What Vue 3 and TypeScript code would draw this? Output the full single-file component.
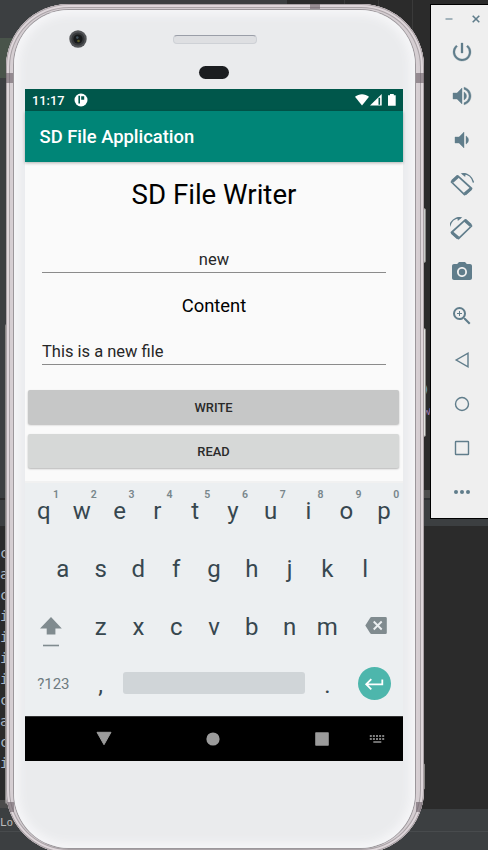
<script setup lang="ts">
import { ref } from 'vue'

const fileName = ref('new')
const content = ref('This is a new file')

const codeGlyphs = ['c', 'a', 'c', 'i', 'i', 'i', 'i', 'c', 'a', 'c', 'i']
const topRow = 'qwertyuiop'.split('').map((key, i) => ({ key, digit: (i + 1) % 10 }))
const homeRow = 'asdfghjkl'.split('')
const bottomRow = 'zxcvbnm'.split('')
</script>

<template>
  <main class="stage">
    <div class="desktop">
      <div class="ide-left">
        <div class="ide-highlight"></div>
        <div class="ide-code">
          <span v-for="(glyph, i) in codeGlyphs" :key="i">{{ glyph }}</span>
        </div>
      </div>
      <div class="ide-right"></div>
      <div class="ide-top"><i></i><i></i><i></i></div>
      <div class="ide-bottom"><span>Lo</span></div>
      <span class="hint hint-paren">)</span>
      <span class="hint hint-w">w</span>
    </div>

    <section class="phone">
      <i class="side-button power"></i>
      <i class="side-button volume"></i>
      <i class="side-button lower"></i>
      <i class="side-button left"></i>
      <div class="metal">
        <i class="band band-top"></i>
        <i class="band band-tl"></i>
        <i class="band band-tr"></i>
        <i class="band band-bl"></i>
        <i class="band band-br"></i>
        <div class="face">
          <div class="hardware">
            <svg class="camera" viewBox="0 0 18 18">
              <circle cx="9" cy="9" r="8.7" fill="#525457" />
              <circle cx="9" cy="9" r="6.6" fill="#36383b" />
              <circle cx="9" cy="9" r="4.6" fill="#17191b" />
              <circle cx="8.3" cy="7.6" r="1.3" fill="#41505b" />
              <circle cx="9.5" cy="11" r="1.3" fill="#5d5c27" />
            </svg>
            <div class="speaker"></div>
            <div class="sensor"></div>
          </div>

          <div class="screen">
            <div class="status">
              <span>11:17</span>
              <svg class="app-badge" viewBox="0 0 14 14">
                <circle cx="7" cy="7" r="6.5" fill="#fff" />
                <path d="M4.4 2.8H6v7.6H4.4zM7.2 3.2h3v3.6h-3z" fill="#00574b" />
              </svg>
              <svg class="signals" viewBox="0 0 42 14">
                <path d="M0 3.7C4 .3 10 .3 14 3.7L7 12.5z" fill="#fff" />
                <path d="M15 12.5 26.7 1v11.5z" fill="#fff" />
                <path d="M24.3 4.8v6.9" stroke="#00574b" stroke-width="1.6" />
                <path d="M33 2.2h2V1h3.8v1.2h1.9v10.5H33z" fill="#fff" />
              </svg>
            </div>
            <header class="app-bar">SD File Application</header>

            <div class="content">
              <h1>SD File Writer</h1>
              <div class="field centered">{{ fileName }}</div>
              <h2>Content</h2>
              <div class="field">{{ content }}</div>
              <button class="write" type="button">WRITE</button>
              <button class="read" type="button">READ</button>
            </div>

            <div class="keyboard">
              <div class="row">
                <span v-for="k in topRow" :key="k.key" class="key">{{ k.key }}<sup>{{ k.digit }}</sup></span>
              </div>
              <div class="row home">
                <span v-for="k in homeRow" :key="k" class="key">{{ k }}</span>
              </div>
              <div class="row">
                <span class="key wide shift">
                  <svg viewBox="0 0 22 30">
                    <path d="M11 0 21.8 11.5h-6.4v6H6.7v-6H0z" fill="#808b8f" />
                    <path d="M3 28.5h16" stroke="#808b8f" stroke-width="1.6" />
                  </svg>
                </span>
                <span v-for="k in bottomRow" :key="k" class="key">{{ k }}</span>
                <span class="key wide erase">
                  <svg viewBox="0 0 22 17">
                    <path d="M6.5 0h14q1.3 0 1.3 1.3v14.4q0 1.3-1.3 1.3h-14q-.8 0-1.3-.8L.3 8.5 5.2.8Q5.7 0 6.5 0z" fill="#808b8f" />
                    <path d="m8.7 4.5 8 8m0-8-8 8" stroke="#eceff1" stroke-width="1.9" />
                  </svg>
                </span>
              </div>
              <div class="row">
                <span class="key wide symbols">?123</span>
                <span class="key punct">,</span>
                <span class="space"></span>
                <span class="key punct">.</span>
                <span class="key wide">
                  <svg class="enter" viewBox="0 0 33 33">
                    <circle cx="16.5" cy="16.5" r="16.5" fill="#4db6ac" />
                    <path d="M24.3 12.5v4.8H9M13.3 12.2 8.2 17.3l5.1 5.1" fill="none" stroke="#fff" stroke-width="1.8" />
                  </svg>
                </span>
              </div>
            </div>

            <nav class="nav-bar">
              <svg width="16" height="16" viewBox="0 0 16 16"><path d="M1 1.3h14L8 13.7z" fill="#9b9b9b" stroke="#9b9b9b" stroke-linejoin="round" /></svg>
              <svg width="16" height="16" viewBox="0 0 16 16"><circle cx="8" cy="8" r="6.6" fill="#9b9b9b" /></svg>
              <svg width="16" height="16" viewBox="0 0 16 16"><rect x="1.2" y="1.3" width="13.6" height="13.4" rx=".7" fill="#9b9b9b" /></svg>
              <svg width="16" height="16" viewBox="0 0 16 16">
                <path d="M.8 5h15M.8 8.1h15" stroke="#aaa" stroke-width="1.5" stroke-dasharray="2 1.1" />
                <path d="M4.3 11h8" stroke="#aaa" stroke-width="1.3" />
              </svg>
            </nav>
          </div>
        </div>
      </div>
    </section>

    <aside class="tools">
      <div class="window-buttons">
        <svg width="10" height="10" viewBox="0 0 10 10"><path d="M1.5 5h7" stroke="#90a4ae" stroke-width="1.6" /></svg>
        <svg width="10" height="10" viewBox="0 0 10 10"><path d="m1.7 1.7 6.6 6.6m0-6.6L1.7 8.3" stroke="#607d8b" stroke-width="1.6" /></svg>
      </div>
      <svg viewBox="0 0 24 24"><path d="M13 3h-2v10h2V3zm4.83 2.17-1.42 1.42A6.92 6.92 0 0 1 19 12a7 7 0 1 1-11.42-5.42L6.17 5.17A8.93 8.93 0 0 0 3 12a9 9 0 1 0 14.83-6.83z" stroke="#607d8b" stroke-width=".3" /></svg>
      <svg viewBox="0 0 24 24"><path d="M3 9v6h4l5 5V4L7 9H3zm13.5 3c0-1.77-1.02-3.29-2.5-4.03v8.05c1.48-.73 2.5-2.25 2.5-4.02zM14 3.23v2.06c2.89.86 5 3.54 5 6.71s-2.11 5.85-5 6.71v2.06c4.01-.91 7-4.49 7-8.77s-2.99-7.86-7-8.77z" stroke="#607d8b" stroke-width=".4" /></svg>
      <svg viewBox="0 0 24 24"><path d="M18.5 12c0-1.77-1.02-3.29-2.5-4.03v8.05c1.48-.73 2.5-2.25 2.5-4.02zM5 9v6h4l5 5V4L9 9H5z" stroke="#607d8b" stroke-width=".4" /></svg>
      <svg viewBox="0 0 24 24">
        <g class="line">
          <path d="M7.7 3.8 21.6 16.5l-7.1 6.2L1.4 10z" stroke-width="1.7" stroke-linejoin="round" />
          <path d="m2.2 9.5 5.9-5.2M14.8 22l6.2-5.4" stroke-width="3.2" />
          <path d="M12.5 1.7c5.5-.3 9.7 3.3 11 8.8" stroke-width="1.4" />
        </g>
        <path d="m10.7 1.2 5-.3-.5 4.2z" />
      </svg>
      <svg viewBox="0 0 24 24">
        <g transform="matrix(-1 0 0 1 23 0)">
          <g class="line">
            <path d="M7.7 3.8 21.6 16.5l-7.1 6.2L1.4 10z" stroke-width="1.7" stroke-linejoin="round" />
            <path d="m2.2 9.5 5.9-5.2M14.8 22l6.2-5.4" stroke-width="3.2" />
            <path d="M12.5 1.7c5.5-.3 9.7 3.3 11 8.8" stroke-width="1.4" />
          </g>
          <path d="m10.7 1.2 5-.3-.5 4.2z" />
        </g>
      </svg>
      <svg viewBox="0 0 24 24"><circle cx="12" cy="12" r="3.2" /><path d="M9 2 7.17 4H4c-1.1 0-2 .9-2 2v12c0 1.1.9 2 2 2h16c1.1 0 2-.9 2-2V6c0-1.1-.9-2-2-2h-3.17L15 2H9zm3 15c-2.76 0-5-2.24-5-5s2.24-5 5-5 5 2.24 5 5-2.24 5-5 5z" /></svg>
      <svg viewBox="0 0 24 24"><path d="M15.5 14h-.79l-.28-.27A6.47 6.47 0 0 0 16 9.5 6.5 6.5 0 1 0 9.5 16c1.61 0 3.09-.59 4.23-1.57l.27.28v.79l5 4.99L20.49 19l-4.99-5zm-6 0C7.01 14 5 11.99 5 9.5S7.01 5 9.5 5 14 7.01 14 9.5 11.99 14 9.5 14zm2.5-4h-2v2H9v-2H7V9h2V7h1v2h2v1z" /></svg>
      <svg class="line" viewBox="0 0 24 24"><path d="M18 5.2v13.6L6.2 12z" stroke-width="1.4" /></svg>
      <svg class="line" viewBox="0 0 24 24"><circle cx="12" cy="12" r="6.5" stroke-width="1.4" /></svg>
      <svg class="line" viewBox="0 0 24 24"><rect x="5.5" y="5.5" width="13" height="13" rx=".6" stroke-width="1.4" /></svg>
      <svg viewBox="0 0 24 24"><circle cx="6" cy="12" r="2" /><circle cx="12" cy="12" r="2" /><circle cx="18" cy="12" r="2" /></svg>
    </aside>
  </main>
</template>

<style>
body {
  margin: 0;
  overflow: hidden;
}
</style>

<style scoped>
.stage {
  position: relative;
  box-sizing: border-box;
  display: flex;
  align-items: flex-start;
  gap: 6px;
  width: 488px;
  height: 850px;
  padding: 4px 0 0 6px;
  overflow: hidden;
  background: #2b2b2b;
  font-family: Roboto, "Noto Sans", sans-serif;
}

.desktop {
  position: absolute;
  inset: 0;
}

.ide-left {
  position: absolute;
  left: 0;
  top: 0;
  width: 60px;
  height: 100%;
  background: linear-gradient(#3c3f41 0 498px, #2b2b2b 498px 500px, #3c3f41 500px 526px, #2b2b2b 526px 800px, #4b4b4b 800px 808px, #3c3f41 808px);
}

.ide-highlight {
  height: 40px;
  margin-top: 38px;
  background: #49544a;
}

.ide-code {
  display: flex;
  flex-direction: column;
  margin-top: 465px;
  color: #a9b7c6;
  font: 14px/21px "DejaVu Sans Mono", monospace;
}

.ide-right {
  position: absolute;
  right: 0;
  top: 490px;
  width: 80px;
  height: 36px;
  background: linear-gradient(#4d4d4d 0 8px, #2e3032 8px 10px, #3c3f41 10px);
}

.ide-top {
  position: absolute;
  left: 0;
  top: 0;
  display: flex;
  gap: 33px;
  width: 201px;
  height: 78px;
  padding-left: 287px;
  background: linear-gradient(#3c3f41, #3c3f41) 0 0 / 287px 38px no-repeat;
}

.ide-top i {
  flex: none;
  width: 1px;
  background: #3a3a3a;
  margin-left: 57px;
}

.ide-top i + i {
  margin-left: 0;
}

.ide-bottom {
  position: absolute;
  inset: 809px 0 0;
  background: linear-gradient(#3c3f41 0 22px, #484b4d 22px 23px, #3c3f41 23px);
  color: #bbb;
  font: 11px/27px "DejaVu Sans Mono", monospace;
}

.hint {
  position: absolute;
  font: 13px/16px "DejaVu Sans Mono", monospace;
}

.hint-paren {
  left: 422px;
  top: 382px;
  color: #6897bb;
}

.hint-w {
  left: 423px;
  top: 403px;
  color: #9876aa;
}

.phone {
  position: relative;
  flex: none;
  width: 418px;
  height: 849px;
}

.side-button {
  position: absolute;
  box-sizing: border-box;
  border: 1px solid #898785;
  border-radius: 2px;
  background: #c8cbc8;
}

.power {
  left: 414px;
  top: 204px;
  width: 6px;
  height: 55px;
}

.volume {
  left: 414px;
  top: 324px;
  width: 6px;
  height: 109px;
  background: #e0e2df;
}

.lower {
  left: 414px;
  top: 759px;
  width: 5px;
  height: 27px;
}

.left {
  left: -1px;
  top: 320px;
  width: 3px;
  height: 480px;
  background: #a29da0;
}

.metal {
  position: relative;
  box-sizing: border-box;
  height: 100%;
  padding: 6px 9px 5px 8px;
  overflow: hidden;
  border-radius: 63px;
  background: #d7cfd3;
  box-shadow: inset 0 0 0 1px #aaa2a6, inset 0 0 0 3px #ded6da, inset 0 0 0 4px #aaa3a7, inset 0 0 0 6px #d5ced2;
}

.band {
  position: absolute;
  width: 8px;
  height: 10px;
  background: rgb(105 94 101 / 60%);
}

.band-top {
  left: 304px;
  top: 0;
  width: 10px;
  height: 6px;
}

.band-tl {
  left: 0;
  top: 69px;
}

.band-tr {
  right: 0;
  top: 69px;
}

.band-bl {
  left: 0;
  bottom: 41px;
}

.band-br {
  right: 0;
  bottom: 41px;
}

.face {
  position: relative;
  display: flex;
  flex-direction: column;
  align-items: flex-start;
  box-sizing: border-box;
  height: 838px;
  padding-left: 11px;
  border-radius: 55px;
  background: #eaebed;
  box-shadow: 0 0 0 1px #9b979b, inset 0 0 10px 5px #f6f6f8;
}

.hardware {
  display: grid;
  grid-template-columns: 145px 84px 1fr;
  grid-template-rows: 36px 43px;
  justify-items: center;
  align-items: center;
  box-sizing: border-box;
  width: 378px;
  height: 79px;
}

.camera {
  width: 18px;
  height: 18px;
  margin: 22px 39px 0 0;
}

.speaker {
  box-sizing: border-box;
  width: 84px;
  height: 9px;
  margin: 23px 0 0 5px;
  border: 1px solid #ced1d6;
  border-top-color: #9a9ea8;
  border-radius: 4px;
  background: #dedfe2;
}

.sensor {
  grid-column: 2;
  align-self: start;
  width: 30px;
  height: 13px;
  margin: 20px 0 0 4px;
  border-radius: 7px;
  background: #1b1d20;
}

.screen {
  width: 378px;
  height: 672px;
  background: #fafafa;
}

.status {
  display: flex;
  align-items: center;
  box-sizing: border-box;
  height: 22px;
  padding: 0 6px 0 7px;
  background: #00574b;
  color: #fff;
  font-size: 12.8px;
  font-weight: 500;
}

.app-badge {
  width: 14px;
  height: 14px;
  margin-left: 10px;
}

.signals {
  width: 42px;
  height: 14px;
  margin-left: auto;
}

.app-bar {
  position: relative;
  height: 51px;
  padding-left: 14.5px;
  background: #008577;
  box-shadow: 0 1px 3px rgb(0 0 0 / 30%);
  color: #fff;
  font-size: 18.4px;
  font-weight: 500;
  line-height: 52px;
}

.content {
  display: flex;
  flex-direction: column;
  height: 319px;
  border-bottom: 2px solid #f1f1f1;
}

h1,
h2 {
  margin: 0;
  color: #000;
  font-weight: 400;
  text-align: center;
}

h1 {
  height: 66px;
  font-size: 27.6px;
  line-height: 66px;
}

.field {
  box-sizing: border-box;
  height: 27px;
  margin: 18px 17px 0;
  border-bottom: 1px solid #8b8b8b;
  color: #272727;
  font-size: 16.5px;
  line-height: 27px;
}

.centered {
  text-align: center;
}

h2 {
  height: 30px;
  margin-top: 18px;
  font-size: 18.4px;
  line-height: 30px;
}

.content h2 + .field {
  margin-top: 17px;
}

button {
  height: 34px;
  margin: 25px 4px 0 3px;
  padding: 1px 0 0;
  border: 0;
  border-radius: 2px;
  background: #c6c7c7;
  box-shadow: 0 1px 2px rgb(0 0 0 / 28%);
  color: #2a2a2a;
  font: 500 12.9px/33px Roboto, sans-serif;
}

.read {
  margin-top: 10px;
  background: #d6d8d7;
}

.keyboard {
  height: 233px;
  background: #eceff1;
}

.row {
  display: flex;
  height: 58px;
}

.home {
  padding: 0 18.9px;
}

.key {
  position: relative;
  display: flex;
  justify-content: center;
  align-items: center;
  box-sizing: border-box;
  width: 37.8px;
  height: 56px;
  color: #37474f;
  font-size: 24px;
}

.wide {
  width: 56.7px;
}

sup {
  position: absolute;
  left: 28px;
  top: 6px;
  color: #78868b;
  font-size: 10.5px;
  font-weight: 600;
  line-height: 12px;
}

.shift svg {
  width: 22px;
  height: 30px;
  margin: 9px 4px 0 0;
}

.erase svg {
  width: 22px;
  height: 17px;
  margin: -3px 0 0 3px;
}

.symbols {
  padding-bottom: 2px;
  color: #6e7b80;
  font-size: 15px;
}

.space {
  box-sizing: border-box;
  width: 182px;
  height: 22px;
  margin: 15px 3.5px 0;
  border-radius: 3px;
  background: #d0d5d8;
}

.enter {
  width: 33px;
  height: 33px;
  margin-top: -3px;
}

.nav-bar {
  display: flex;
  align-items: center;
  gap: 93px;
  box-sizing: border-box;
  height: 45px;
  padding: 0 0 1px 71px;
  border-top: 1px solid #333;
  background: #000;
}

.nav-bar svg {
  flex: none;
}

.nav-bar svg:last-child {
  margin-left: -54px;
}

.tools {
  position: relative;
  flex: none;
  display: flex;
  flex-direction: column;
  align-items: center;
  gap: 20px;
  box-sizing: border-box;
  width: 64px;
  height: 515px;
  padding: 35px 1px 0 0;
  border: solid #000;
  border-width: 1px 0 1px 1px;
  background: #efefef;
  fill: #607d8b;
}

.tools > svg {
  flex: none;
  width: 24px;
  height: 24px;
}

.window-buttons {
  position: absolute;
  left: 13px;
  top: 9px;
  display: flex;
  gap: 17px;
}

.line {
  fill: none;
  stroke: #607d8b;
}
</style>
